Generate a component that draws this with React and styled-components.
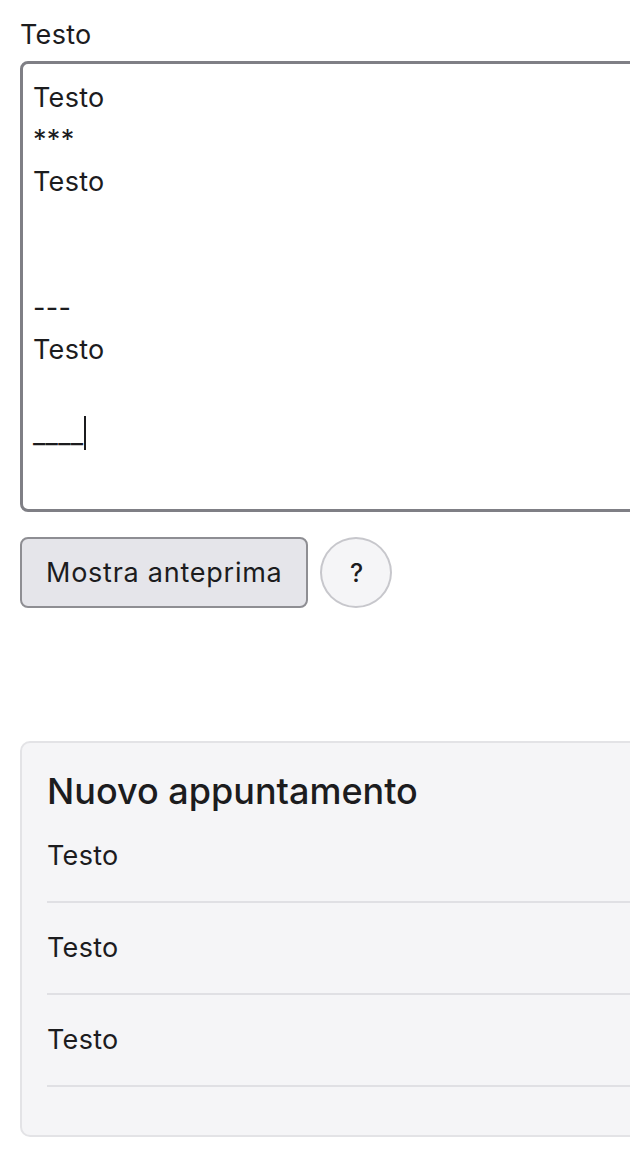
import React from "react";
import styled, { createGlobalStyle } from "styled-components";

const GlobalStyle = createGlobalStyle`
  html, body {
    margin: 0;
    padding: 0;
    background: #ffffff;
    overflow-x: hidden;
  }
  body {
    font-family: Inter, "Noto Sans", sans-serif;
    color: #1c1c1e;
  }
`;

const Page = styled.div`
  width: 760px;
  padding: 18px 20px 20px 20px;
  box-sizing: border-box;
`;

const Label = styled.div`
  font-size: 27px;
  line-height: 34px;
  margin-bottom: 9px;
  letter-spacing: 0.3px;
`;

const Editor = styled.div`
  border: 3px solid #7f7f85;
  border-radius: 8px;
  padding: 13px 10px 54px 10px;
  font-size: 27px;
  line-height: 42px;
  letter-spacing: 0.3px;
  white-space: pre;
`;

const Line = styled.div`
  height: 42px;
`;

const Caret = styled.span`
  display: inline-block;
  width: 2px;
  height: 34px;
  background: #1c1c1e;
  vertical-align: -7px;
  margin-left: 1px;
`;

const Actions = styled.div`
  display: flex;
  align-items: center;
  gap: 12px;
  margin-top: 25px;
`;

const Button = styled.button`
  font-family: Inter, "Noto Sans", sans-serif;
  font-size: 27px;
  letter-spacing: 0.75px;
  color: #1c1c1e;
  height: 71px;
  padding: 0 24px;
  background: #e5e5ea;
  border: 2px solid #8e8e93;
  border-radius: 8px;
`;

const HelpButton = styled.button`
  font-family: Inter, "Noto Sans", sans-serif;
  font-size: 25px;
  font-weight: 500;
  color: #1c1c1e;
  width: 72px;
  height: 71px;
  border-radius: 50%;
  background: #f5f5f7;
  border: 2px solid #c7c7cc;
  padding: 0;
`;

const Panel = styled.section`
  margin-top: 133px;
  background: #f5f5f7;
  border: 2px solid #e3e3e6;
  border-radius: 10px;
  padding: 26px 0 48px 25px;
`;

const PanelTitle = styled.h2`
  margin: 0 0 26px 0;
  font-size: 36px;
  font-weight: 500;
  line-height: 44px;
`;

const List = styled.ul`
  list-style: none;
  margin: 0;
  padding: 0;
`;

const Item = styled.li`
  font-size: 27px;
  letter-spacing: 0.3px;
  line-height: 34px;
  padding: 28px 0;
  border-bottom: 2px solid #e0e0e4;

  &:first-child {
    padding-top: 0;
  }
`;

const lines = ["Testo", "***", "Testo", "", "", "---", "Testo", ""];

export default function App() {
  return (
    <>
      <GlobalStyle />
      <Page>
        <Label>Testo</Label>
        <Editor>
          {lines.map((l, i) => (
            <Line key={i}>{l}</Line>
          ))}
          <Line>
            ____
            <Caret />
          </Line>
        </Editor>
        <Actions>
          <Button>Mostra anteprima</Button>
          <HelpButton>?</HelpButton>
        </Actions>
        <Panel>
          <PanelTitle>Nuovo appuntamento</PanelTitle>
          <List>
            <Item>Testo</Item>
            <Item>Testo</Item>
            <Item>Testo</Item>
          </List>
        </Panel>
      </Page>
    </>
  );
}
